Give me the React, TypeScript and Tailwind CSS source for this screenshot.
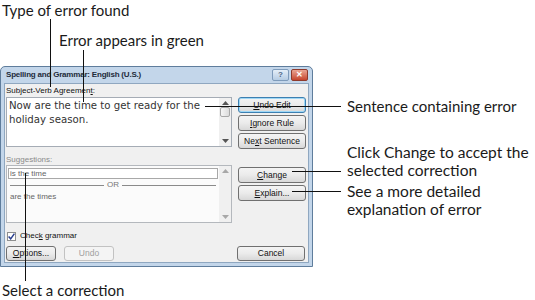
import React from 'react';

const ui = { fontFamily: '"Liberation Sans", Arial, sans-serif' };
const note = { fontFamily: 'Lato, "Open Sans", sans-serif' };

const Btn: React.FC<{ children: React.ReactNode; className?: string; primary?: boolean; disabled?: boolean }> = ({
  children,
  className = '',
  primary,
  disabled,
}) => (
  <div
    className={`flex items-center justify-center rounded-[3px] border text-[8.5px] leading-none ${
      primary ? 'border-[#3c7fb1] shadow-[inset_0_0_0_1px_#9ed7f5]' : disabled ? 'border-[#c2c2c2]' : 'border-[#707070]'
    } ${disabled ? 'bg-[#f4f4f4] text-[#a0a0a0]' : 'bg-gradient-to-b from-[#f4f4f4] via-[#ebebeb] to-[#d8d8d8] text-[#111]'} ${className}`}
  >
    {children}
  </div>
);

const Scroll: React.FC<{ thumb?: boolean; disabled?: boolean }> = ({ thumb, disabled }) => (
  <div className="flex w-[12px] flex-col items-center justify-between bg-[#f0f0f0] py-[3px]">
    <div className="flex flex-col items-center gap-[2px]">
      <svg width="7" height="4" viewBox="0 0 7 4">
        <path d="M0 4 L3.5 0 L7 4 Z" fill={disabled ? '#a8a8a8' : '#555'} />
      </svg>
      {thumb && <div className="h-[10px] w-[10px] rounded-[2px] border border-[#a8a8a8] bg-gradient-to-r from-[#f6f6f6] to-[#dcdcdc]" />}
    </div>
    <svg width="7" height="4" viewBox="0 0 7 4">
      <path d="M0 0 L3.5 4 L7 0 Z" fill={disabled ? '#a8a8a8' : '#555'} />
    </svg>
  </div>
);

const Dialog: React.FC = () => (
  <div
    className="flex w-[313px] flex-col rounded-t-[5px] border border-[#5f7d9c] bg-[#c3d6ea] px-[3px] pb-[3px]"
    style={ui}
  >
    {/* title bar */}
    <div className="flex h-[16px] items-center justify-between pl-[2px] pr-[1px]">
      <span className="text-[8px] font-bold tracking-[-0.2px] text-[#1e2b3a]">Spelling and Grammar: English (U.S.)</span>
      <div className="flex gap-[2px]">
        <div className="flex h-[12px] w-[17px] items-center justify-center rounded-[2px] border border-[#7e9bbb] bg-gradient-to-b from-[#e4eef8] to-[#b6cce3] text-[8px] font-bold leading-none text-[#4b6786]">
          ?
        </div>
        <div className="flex h-[12px] w-[17px] items-center justify-center rounded-[2px] border border-[#8e3a2c] bg-gradient-to-b from-[#e9a493] to-[#c5432c] text-[8px] font-bold leading-none text-white">
          ✕
        </div>
      </div>
    </div>

    {/* body */}
    <div className="flex flex-col border border-[#8fa7c0] bg-[#f0f0f0] px-[1px] pb-[1px] pt-[2px]">
      <div className="h-[10px] text-[8px] leading-[10px] text-[#111]">
        Subject-Verb Agreemen<span className="underline">t</span>:
      </div>
      <div className="mt-[1px] flex">
        <div className="flex h-[50px] w-[226px] border border-[#a5acb5] bg-white">
          <div
            className="flex-1 px-[2px] pt-[1px] text-[10.2px] leading-[13.5px] text-[#333]"
            style={{ fontFamily: '"DejaVu Sans", Verdana, sans-serif' }}
          >
            Now are the time to get ready for the holiday season.
          </div>
          <Scroll thumb />
        </div>
        <div className="ml-[6px] flex w-[68px] flex-col gap-[2px]">
          <Btn primary className="h-[16px]">
            <span className="underline">U</span>ndo Edit
          </Btn>
          <Btn className="h-[16px]">
            <span className="underline">I</span>gnore Rule
          </Btn>
          <Btn className="h-[16px]">
            Ne<span className="underline">x</span>t Sentence
          </Btn>
        </div>
      </div>

      <div className="mt-[6px] h-[10px] text-[8px] leading-[10px] text-[#8a8a8a]">Suggestions:</div>
      <div className="flex">
        <div className="flex h-[58px] w-[226px] border border-[#b4b8bd] bg-[#fbfbfb]">
          <div className="flex flex-1 flex-col px-[1px] pt-[2px] text-[8px] text-[#666]">
            <div className="h-[11px] border border-[#a8a8a8] bg-white pl-[1px] leading-[9px]">is the time</div>
            <div className="mt-[1px] flex h-[10px] items-center gap-[3px] px-[2px]">
              <div className="h-px flex-1 bg-[#8a8a8a]" />
              <span className="leading-none text-[#777]">OR</span>
              <div className="h-px flex-1 bg-[#8a8a8a]" />
            </div>
            <div className="mt-[2px] pl-[2px] leading-[10px]">are the times</div>
          </div>
          <Scroll disabled />
        </div>
        <div className="ml-[6px] flex w-[68px] flex-col gap-[2px] pt-[2px]">
          <Btn className="h-[16px]">
            <span className="underline">C</span>hange
          </Btn>
          <Btn className="h-[16px]">
            <span className="underline">E</span>xplain...
          </Btn>
        </div>
      </div>

      <div className="mt-[8px] flex h-[10px] items-center gap-[4px] pl-[1px] text-[8px] text-[#111]">
        <div className="flex h-[9px] w-[9px] items-center justify-center border border-[#8e8f8f] bg-white">
          <svg width="7" height="7" viewBox="0 0 6 6">
            <path d="M0.5 3 L2.3 5 L5.5 0.5" stroke="#2a3f8f" strokeWidth="1.3" fill="none" />
          </svg>
        </div>
        <span>
          Chec<span className="underline">k</span> grammar
        </span>
      </div>

      <div className="mt-[5px] flex">
        <Btn className="h-[15px] w-[50px]">
          <span className="underline">O</span>ptions...
        </Btn>
        <Btn disabled className="ml-[8px] h-[15px] w-[50px]">
          Undo
        </Btn>
        <Btn className="ml-auto mr-[2px] h-[15px] w-[68px]">Cancel</Btn>
      </div>
    </div>
  </div>
);

export default function App() {
  return (
    <div className="relative h-[300px] w-[535px] overflow-hidden bg-white pt-[66px]">
      <Dialog />

      {/* callouts */}
      <div className="absolute left-[2px] top-[1px] text-[15px] leading-[18px] text-[#1a1a1a]" style={note}>
        Type of error found
      </div>
      <div className="absolute left-[59px] top-[31px] text-[15px] leading-[18px] text-[#1a1a1a]" style={note}>
        Error appears in green
      </div>
      <div className="absolute left-[347px] top-[97px] text-[15px] leading-[18px] text-[#1a1a1a]" style={note}>
        Sentence containing error
      </div>
      <div className="absolute left-[347px] top-[143px] text-[15.5px] leading-[18px] text-[#1a1a1a]" style={note}>
        Click Change to accept the
        <br />
        selected correction
      </div>
      <div className="absolute left-[347px] top-[182px] text-[15.5px] leading-[18px] text-[#1a1a1a]" style={note}>
        See a more detailed
        <br />
        explanation of error
      </div>
      <div className="absolute left-[2px] top-[281px] text-[15px] leading-[18px] text-[#1a1a1a]" style={note}>
        Select a correction
      </div>

      <div className="absolute left-[50px] top-[19px] h-[68px] w-px bg-[#111]" />
      <div className="absolute left-[83px] top-[50px] h-[52px] w-px bg-[#111]" />
      <div className="absolute left-[205px] top-[106px] h-px w-[136px] bg-[#111]" />
      <div className="absolute left-[292px] top-[171px] h-px w-[49px] bg-[#111]" />
      <div className="absolute left-[292px] top-[191px] h-px w-[49px] bg-[#111]" />
      <div className="absolute left-[25px] top-[173px] h-[108px] w-px bg-[#111]" />
    </div>
  );
}
